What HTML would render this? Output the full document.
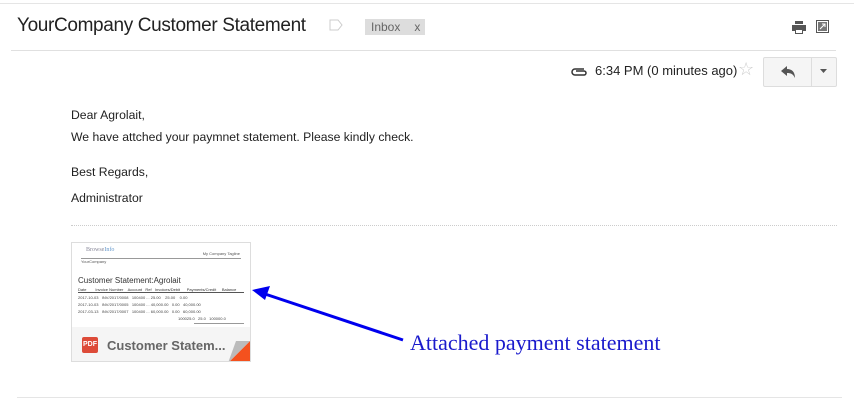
<!DOCTYPE html>
<html><head><style>
*{margin:0;padding:0;box-sizing:border-box}
body{width:854px;height:402px;background:#fff;font-family:"Liberation Sans",sans-serif;position:relative;overflow:hidden;color:#222}
.abs{position:absolute}
</style></head><body>
<div class="abs" style="left:0;top:3px;width:854px;height:1px;background:#e5e5e5"></div>
<div class="abs" style="left:17px;top:15px;font-size:19px;color:#222;letter-spacing:-0.35px">YourCompany Customer Statement</div>
<svg class="abs" style="left:329px;top:19px" width="14" height="12"><path d="M1 1H9L13 6L9 11H1Z" fill="none" stroke="#ccc"/></svg>
<div class="abs" style="left:365px;top:19px;width:60px;height:16px;background:#ddd;font-size:12px;color:#666;line-height:16px;padding-left:6px">Inbox<span style="margin-left:14px">x</span></div>
<svg class="abs" style="left:792px;top:21px" width="14" height="13"><rect x="3" y="0" width="8" height="3" fill="#555"/><rect x="0" y="4" width="14" height="6" fill="#555"/><rect x="3" y="8" width="8" height="5" fill="#555"/><rect x="4" y="9" width="6" height="3" fill="#fff"/></svg>
<svg class="abs" style="left:816px;top:20px" width="13" height="13"><rect x="0.5" y="0.5" width="12" height="12" fill="none" stroke="#555"/><rect x="2" y="2" width="9" height="9" fill="#777"/><path d="M4 9L9 4M6 4H9V7" stroke="#fff" fill="none"/></svg>
<div class="abs" style="left:11px;top:50px;width:825px;height:1px;background:#e0e0e0"></div>
<svg class="abs" style="left:570px;top:66px" width="18" height="10"><path d="M14 3H5a3 3 0 0 0 0 6h9a2 2 0 0 0 0-4H6" fill="none" stroke="#333" stroke-width="1.5"/></svg>
<div class="abs" style="left:595px;top:63px;font-size:13px;color:#222">6:34 PM (0 minutes ago)</div>
<div class="abs" style="left:738px;top:59px;font-size:18px;color:#ccc">☆</div>
<div class="abs" style="left:763px;top:57px;width:74px;height:30px;border:1px solid #ddd;border-radius:2px;background:#f5f5f5"></div>
<div class="abs" style="left:811px;top:57px;width:1px;height:30px;background:#ddd"></div>
<svg class="abs" style="left:780px;top:65px" width="16" height="14"><path d="M1 6L7 1V4C12 4 15 7 15 13C13 9 11 8 7 8V11Z" fill="#555"/></svg>
<svg class="abs" style="left:820px;top:69px" width="8" height="5"><path d="M0 0H7L3.5 4Z" fill="#555"/></svg>
<div class="abs" style="left:71px;top:104px;font-size:12.2px;line-height:22px">Dear Agrolait,<br>We have attched your paymnet statement. Please kindly check.</div>
<div class="abs" style="left:71px;top:159px;font-size:12.2px;line-height:26px">Best Regards,<br>Administrator</div>
<div class="abs" style="left:71px;top:225px;width:766px;border-top:1px dotted #ccc"></div>
<div class="abs" style="left:71px;top:242px;width:180px;height:120px;border:1px solid #ddd;background:#fff;overflow:hidden">
 <div class="abs" style="left:0;top:0;width:178px;height:84px;background:#fff">
  <div class="abs" style="left:14px;top:4px;font-size:6px;color:#889;font-family:'Liberation Serif',serif">Browse<span style="color:#69c">Info</span></div>
  <div class="abs" style="right:10px;top:8px;font-size:4px;color:#555">My Company Tagline</div>
  <div class="abs" style="left:9px;top:15px;width:160px;height:1px;background:#999"></div>
  <div class="abs" style="left:9px;top:16px;font-size:4px;color:#555">YourCompany</div>
  <div class="abs" style="left:6px;top:33px;font-size:8px;color:#333">Customer Statement:Agrolait</div>
  <div class="abs" style="left:6px;top:44px;font-size:4px;color:#333">Date &nbsp;&nbsp;&nbsp;&nbsp;&nbsp;&nbsp; Invoice Number &nbsp;&nbsp; Account &nbsp; Ref &nbsp; Invoices/Debit &nbsp;&nbsp;&nbsp;&nbsp; Payments/Credit &nbsp;&nbsp;&nbsp; Balance</div>
  <div class="abs" style="left:6px;top:49px;width:166px;height:1px;background:#555"></div>
  <div class="abs" style="left:6px;top:51px;width:166px;font-size:4px;color:#444;line-height:7px">2017-10-03 &nbsp; INV/2017/0008 &nbsp; 100400 ... 25.00 &nbsp;&nbsp; 25.00 &nbsp;&nbsp; 0.00<br>2017-10-03 &nbsp; INV/2017/0005 &nbsp; 100400 ... 40,000.00 &nbsp; 0.00 &nbsp; 40,000.00<br>2017-03-13 &nbsp; INV/2017/0007 &nbsp; 100400 ... 60,000.00 &nbsp; 0.00 &nbsp; 60,000.00<br><span style="margin-left:100px">100025.0 &nbsp; 25.0 &nbsp; 100000.0</span></div>
  <div class="abs" style="left:122px;top:80px;width:50px;height:1px;background:#999"></div>
 </div>
 <div class="abs" style="left:0;top:84px;width:178px;height:36px;background:#f5f5f5"></div>
 <div class="abs" style="left:10px;top:94px;width:16px;height:16px;background:#dd4b39;border-radius:2px;color:#fff;font-size:7px;font-weight:bold;text-align:center;line-height:16px">PDF</div>
 <div class="abs" style="left:35px;top:95px;font-size:13px;font-weight:bold;color:#666">Customer Statem...</div>
 <svg class="abs" style="left:156px;top:98px" width="22" height="22"><path d="M22 0V22H0Z" fill="#f4511e"/><path d="M0 22L22 0H8Z" fill="#bbb"/></svg>
</div>
<svg class="abs" style="left:250px;top:284px" width="160" height="60"><path d="M153 56L12 9" stroke="#0000ee" stroke-width="3"/><path d="M2 6L20 2L15 16Z" fill="#0000ee"/></svg>
<div class="abs" style="left:410px;top:330px;font-size:22px;color:#1a1acc;font-family:'Liberation Serif',serif">Attached payment statement</div>
<div class="abs" style="left:17px;top:397px;width:825px;height:1px;background:#e5e5e5"></div>
</body></html>
